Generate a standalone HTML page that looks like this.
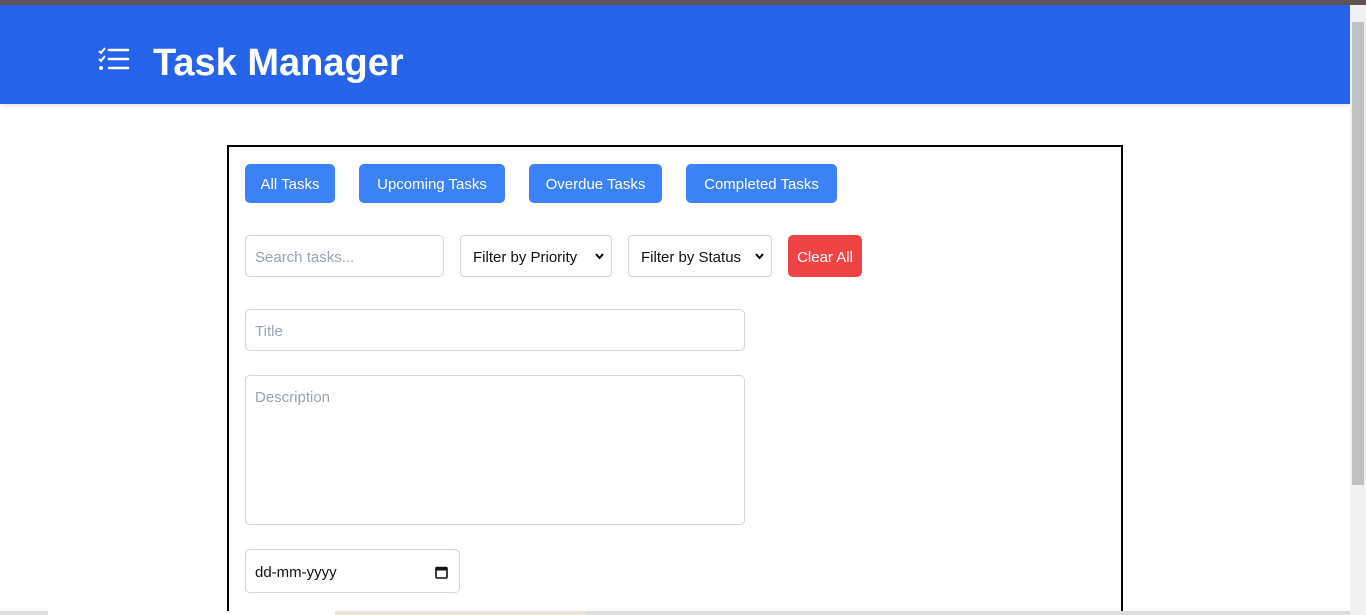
<!DOCTYPE html>
<html><head><style>
*{box-sizing:border-box;margin:0;padding:0}
html,body{width:1366px;height:615px;overflow:hidden}
body{background:#fff;font-family:"Liberation Sans",sans-serif;position:relative}
.a{position:absolute}
.btn{position:absolute;top:164px;height:39px;background:#3b82f6;color:#fff;border-radius:5px;font-size:15px;display:flex;align-items:center;justify-content:center;padding-top:2px}
.in{position:absolute;border:1px solid #d1d5db;border-radius:5px;background:#fff;color:#9ca3af;font-size:15px;padding-left:9px}
.sel{position:absolute;top:235px;height:42px;border:1px solid #d1d5db;border-radius:4px;color:#111;font-size:15px;display:flex;align-items:center;padding-left:12px;padding-top:3px}
.sel svg{position:absolute;right:7px;top:17px}
</style></head><body>
<div class="a" style="left:0;top:0;width:1366px;height:5px;background:#5f5458"></div>
<div class="a" style="left:0;top:5px;width:1350px;height:99px;background:#2563eb;box-shadow:0 2px 4px rgba(0,0,0,.1)"></div>
<svg class="a" style="left:97px;top:46px" width="34" height="28" viewBox="0 0 34 28">
<path d="M2 5l2 2 4-5M2 13l2 2 4-5" stroke="#fff" stroke-width="2" fill="none"/>
<circle cx="4" cy="22" r="2" fill="#fff"/>
<path d="M12 4h19M12 13h19M12 22h19" stroke="#fff" stroke-width="2.6" stroke-linecap="round"/>
</svg>
<div class="a" style="left:153px;top:42px;color:#fff;font-size:38px;font-weight:bold;white-space:nowrap">Task Manager</div>
<div class="a" style="left:1350px;top:5px;width:16px;height:610px;background:#f1f1f1"></div>
<div class="a" style="left:1352px;top:22px;width:12px;height:463px;background:#c1c1c1"></div>
<div class="a" style="left:227px;top:145px;width:896px;height:470px;border:2px solid #000;border-bottom:none"></div>
<div class="btn" style="left:245px;width:90px">All Tasks</div>
<div class="btn" style="left:359px;width:146px">Upcoming Tasks</div>
<div class="btn" style="left:529px;width:133px">Overdue Tasks</div>
<div class="btn" style="left:686px;width:151px">Completed Tasks</div>
<div class="in" style="left:245px;top:235px;width:199px;height:42px;line-height:43px">Search tasks...</div>
<div class="sel" style="left:460px;width:152px">Filter by Priority<svg width="9" height="7"><path d="M1 1l3.5 4 3.5-4" stroke="#000" stroke-width="2" fill="none"/></svg></div>
<div class="sel" style="left:628px;width:144px">Filter by Status<svg width="9" height="7"><path d="M1 1l3.5 4 3.5-4" stroke="#000" stroke-width="2" fill="none"/></svg></div>
<div class="a" style="left:788px;top:235px;width:74px;height:42px;background:#ef4444;border-radius:5px;color:#fff;font-size:15px;display:flex;align-items:center;justify-content:center;padding-top:2px">Clear All</div>
<div class="in" style="left:245px;top:309px;width:500px;height:42px;line-height:43px">Title</div>
<div class="in" style="left:245px;top:375px;width:500px;height:150px;padding-top:13px">Description</div>
<div class="in" style="left:245px;top:549px;width:215px;height:44px;line-height:46px;color:#111">dd-mm-yyyy
<svg class="a" style="left:189px;top:16px" width="13" height="13" viewBox="0 0 13 13"><rect x="1" y="1.5" width="11" height="10.5" rx="1" stroke="#111" stroke-width="1.6" fill="none"/><rect x="1" y="1.5" width="11" height="3" fill="#111"/></svg></div>
<div class="a" style="left:0;top:611px;width:1350px;height:4px;background:#ddd;z-index:5"></div>
<div class="a" style="left:48px;top:611px;width:287px;height:4px;background:#fff;z-index:5"></div>
<div class="a" style="left:335px;top:611px;width:250px;height:4px;background:#eee3d6;z-index:5"></div>
</body></html>
